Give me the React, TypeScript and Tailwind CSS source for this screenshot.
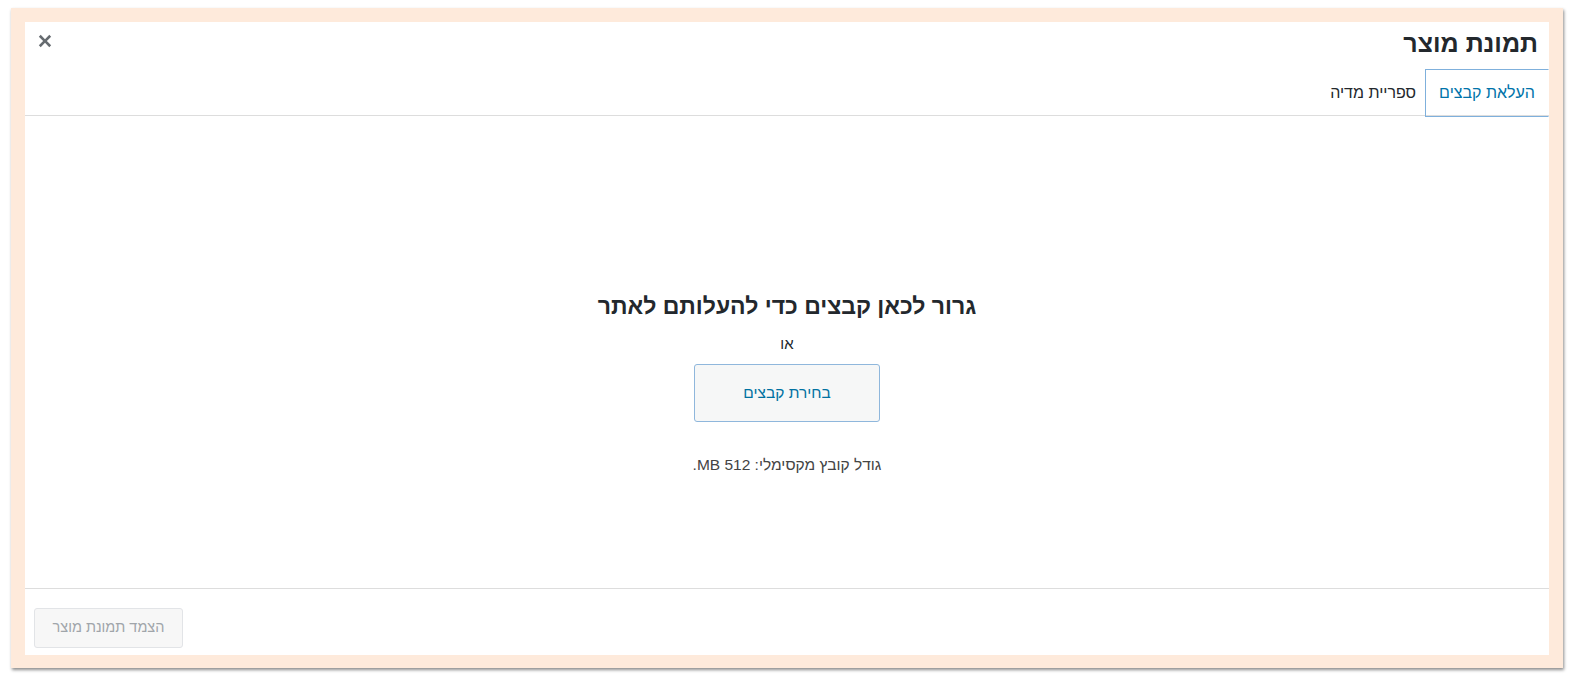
import React from "react";

const font = { fontFamily: '"Liberation Sans", Arial, sans-serif' };

const CloseIcon = () => (
  <svg width="22" height="22" viewBox="0 0 20 20" fill="#666b70">
    <path d="M15.6 6.1 11.7 10l3.9 3.9-1.7 1.7-3.9-3.9-3.9 3.9-1.7-1.7L8.3 10 4.4 6.1l1.7-1.7 3.9 3.9 3.9-3.9z" />
  </svg>
);

export default function App() {
  return (
    <div className="min-h-screen bg-white pt-[8px] pl-[11px]" style={font}>
      <div className="w-[1552px] h-[660px] border-t-[14px] border-l-[14px] border-r-[14px] border-b-[13px] border-[#feeadb] shadow-[1px_2px_3px_rgba(0,0,0,0.45)] bg-white">
        <div dir="rtl" className="flex h-full flex-col bg-white text-[#23282d]">
          {/* header */}
          <div className="relative h-[94px] border-b border-[#dddddd]">
            <h1 className="pr-[11px] pt-[5px] text-[25px] font-semibold leading-[32px] text-[#23282d]">
              תמונת מוצר
            </h1>
            <button className="absolute left-[9px] top-[8px] flex h-[22px] w-[22px] items-center justify-center">
              <CloseIcon />
            </button>
            <div className="absolute bottom-[-2px] right-0 flex items-stretch">
              <div className="flex h-[48px] items-center border border-l-[#7fb0dc] border-t-[#7fb0dc] border-b-[#7fb0dc] border-r-transparent border-[#7fb0dc] px-[13px] text-[16px] text-[#0073aa]">
                העלאת קבצים
              </div>
              <div className="flex h-[48px] items-center px-[9px] text-[16px] text-[#23282d]">
                ספריית מדיה
              </div>
            </div>
          </div>

          {/* drop area */}
          <div className="flex flex-1 flex-col items-center pt-[174px]">
            <h2 className="text-[23px] font-semibold leading-[32px] text-[#23282d]">
              גרור לכאן קבצים כדי להעלותם לאתר
            </h2>
            <p className="mt-[13px] text-[15px] leading-[18px] text-[#23282d]">או</p>
            <button className="mt-[11px] h-[58px] w-[186px] rounded-[3px] border border-[#8fb7dc] bg-[#f6f7f7] text-[15.5px] text-[#0071a1]">
              בחירת קבצים
            </button>
            <p className="mt-[34px] text-[15.5px] leading-[18px] text-[#444444]">
              גודל קובץ מקסימלי: 512 MB.
            </p>
          </div>

          {/* footer */}
          <div className="flex h-[67px] items-start justify-end border-t border-[#dddddd] pl-[9px] pt-[19px]">
            <button
              disabled
              className="h-[40px] w-[149px] rounded-[3px] border border-[#e2e4e7] bg-[#f7f7f7] text-[14.5px] text-[#a0a5aa]"
            >
              הצמד תמונת מוצר
            </button>
          </div>
        </div>
      </div>
    </div>
  );
}
